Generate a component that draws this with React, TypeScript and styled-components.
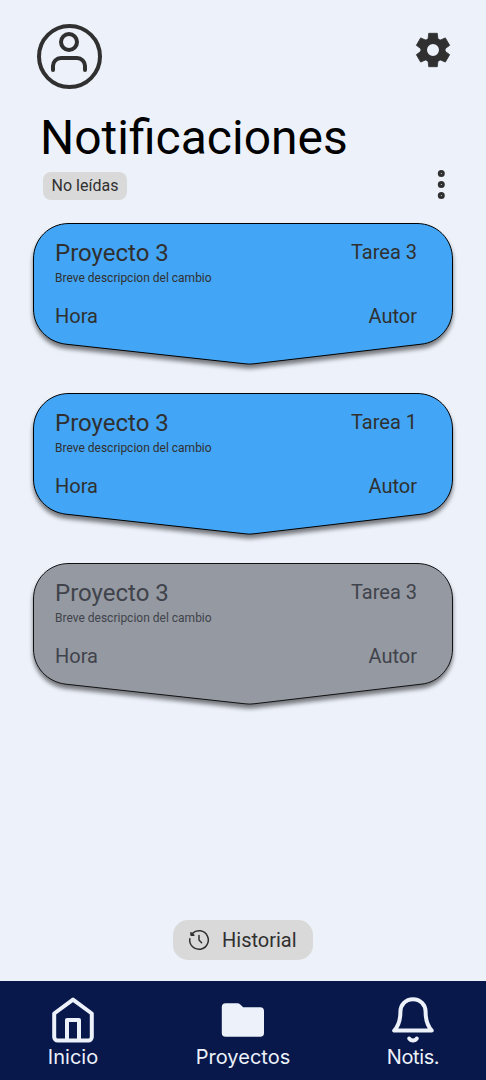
import React from "react";
import styled, { createGlobalStyle } from "styled-components";

const GlobalStyle = createGlobalStyle`
  * { box-sizing: border-box; }
  body { margin: 0; background: #ecf1fa; }
  h1, h2, p { margin: 0; font-weight: 400; }
  button {
    border: 0;
    padding: 0;
    background: none;
    color: inherit;
    font: inherit;
    cursor: pointer;
  }
  svg { display: block; }
`;

const Screen = styled.div`
  display: flex;
  flex-direction: column;
  width: 486px;
  height: 1080px;
  background: #ecf1fa;
  color: #303030;
  font-family: Roboto, "Liberation Sans", sans-serif;
`;

const Header = styled.header`
  display: flex;
  justify-content: space-between;
  align-items: flex-start;
  padding: 24px 33px 0 37px;
`;

const SettingsButton = styled.button`
  margin-top: 6px;
`;

const Title = styled.h1`
  margin: 21px 0 0 40px;
  font-size: 48px;
  line-height: 56px;
  color: #000;
`;

const FilterRow = styled.div`
  display: flex;
  justify-content: space-between;
  align-items: flex-start;
  padding: 6px 39px 0 43px;
`;

const FilterChip = styled.button`
  width: 84px;
  height: 28px;
  border-radius: 8px;
  background: #d9d9d9;
  font-size: 16px;
  line-height: 28px;
`;

const MoreButton = styled.button`
  margin-top: -2px;
`;

const CardList = styled.main`
  display: flex;
  flex-direction: column;
  gap: 28px;
  padding: 23px 33px 0;
`;

const Card = styled.article<{ $read?: boolean }>`
  position: relative;
  height: 142px;
  padding: 15px 36px 0 22px;
  color: ${(p) => (p.$read ? "#40434b" : "#303030")};
`;

const CardShape = styled.svg`
  position: absolute;
  inset: 0;
  overflow: visible;
  filter: drop-shadow(0 4px 2px rgba(0, 0, 0, 0.5));
`;

const CardRow = styled.div`
  position: relative;
  display: flex;
  justify-content: space-between;
  align-items: center;
  height: 30px;
  font-size: 20px;
`;

const Project = styled.h2`
  font-size: 24px;
  line-height: 30px;
`;

const Task = styled.span`
  padding-bottom: 2px;
`;

const Description = styled.p`
  position: relative;
  height: 33px;
  padding-top: 3px;
  font-size: 12px;
  line-height: 14px;
`;

const Footer = styled.div`
  display: flex;
  justify-content: center;
  margin-top: auto;
  padding-bottom: 21px;
`;

const HistoryButton = styled.button`
  display: flex;
  align-items: center;
  gap: 11px;
  width: 140px;
  height: 40px;
  padding-left: 14px;
  border-radius: 15px;
  background: #d9d9d9;
  font-size: 20px;
`;

const NavBar = styled.nav`
  display: flex;
  justify-content: space-between;
  height: 99px;
  padding: 14px 33px 0;
  background: #08184b;
  color: #ecf1fa;
  font-family: Inter, "Liberation Sans", sans-serif;
  text-rendering: geometricPrecision;
`;

const NavItem = styled.button<{ $width: number; $tracking?: number }>`
  display: flex;
  flex-direction: column;
  align-items: center;
  width: ${(p) => p.$width}px;
  height: 74px;
  font-size: 20px;
  line-height: 24px;
  letter-spacing: ${(p) => p.$tracking ?? 0}px;
  white-space: nowrap;
`;

const UserIcon = () => (
  <svg width="65" height="65" viewBox="0 0 65 65" fill="none" stroke="#303030" strokeWidth="4" strokeLinecap="round">
    <circle cx="32.5" cy="32.5" r="30.5" />
    <circle cx="32" cy="18" r="8" />
    <path d="M16 46v-4a8 8 0 0 1 8-8h16a8 8 0 0 1 8 8v4" />
  </svg>
);

const GearIcon = () => (
  <svg width="40" height="40" viewBox="-20 -20 40 40" fill="none" stroke="#303030">
    <circle r="9.300" strokeWidth="6.600" />
    {[0, 60, 120, 180, 240, 300].map((angle) => (
      <path
        key={angle}
        transform={`rotate(${angle})`}
        d="M-4.900-11-4.300-16.700H4.300L4.900-11z"
        fill="#303030"
        strokeWidth=".8"
        strokeLinejoin="round"
      />
    ))}
  </svg>
);

const MoreIcon = () => (
  <svg width="12" height="30" viewBox="0 0 12 30" fill="none" stroke="#303030" strokeWidth="3">
    <circle cx="6.3" cy="3.6" r="2" />
    <circle cx="6.3" cy="14.5" r="2" />
    <circle cx="6.3" cy="25.4" r="2" />
  </svg>
);

const HistoryIcon = () => (
  <svg width="24" height="24" viewBox="0 0 24 24" fill="none" stroke="#303030" strokeWidth="1.5" strokeLinecap="round" strokeLinejoin="round">
    <path d="M2.800 10.800a9.300 9.300 0 1 0 2.700-5.400" />
    <path d="M3.900 4.800 4.100 7.200 6.900 7.300z" fill="#303030" />
    <path d="M12 7.600V12l2.600 2.700" />
  </svg>
);

const HomeIcon = () => (
  <svg width="48" height="50" viewBox="0 0 48 50" fill="none" stroke="#ecf1fa" strokeWidth="4" strokeLinejoin="round">
    <path d="M5.200 18.500 24 4.600l18.800 13.900V42a3.600 3.600 0 0 1-3.600 3.600H8.800A3.600 3.600 0 0 1 5.200 42z" />
    <path d="M18 45V25h12v20" />
  </svg>
);

const FolderIcon = () => (
  <svg width="48" height="50" viewBox="0 0 48 50" fill="#ecf1fa">
    <path d="M6.600 8.200H18.500Q20 8.200 21 9.200L24.200 12.300H41.200a3.800 3.800 0 0 1 3.800 3.800v21.900a3.800 3.800 0 0 1-3.800 3.800H6.600a3.800 3.800 0 0 1-3.800-3.800V12a3.800 3.800 0 0 1 3.800-3.800z" />
  </svg>
);

const BellIcon = () => (
  <svg width="48" height="50" viewBox="0 0 48 50" fill="none" stroke="#ecf1fa" strokeWidth="4" strokeLinecap="round" strokeLinejoin="round">
    <path d="M24 4.200c-7.400 0-12.600 5.600-12.600 12.600C11.400 27 9 31.500 5.200 35.600h37.600C39 31.500 36.600 27 36.600 16.800 36.600 9.800 31.400 4.200 24 4.200z" />
    <path d="M20.200 43.500c1.700 2.700 5.900 2.700 7.600 0" />
  </svg>
);

const notifications = [
  { project: "Proyecto 3", task: "Tarea 3", read: false },
  { project: "Proyecto 3", task: "Tarea 1", read: false },
  { project: "Proyecto 3", task: "Tarea 3", read: true },
];

export default function App() {
  return (
    <>
      <GlobalStyle />
      <Screen>
        <Header>
          <button aria-label="Perfil"><UserIcon /></button>
          <SettingsButton aria-label="Ajustes"><GearIcon /></SettingsButton>
        </Header>
        <Title>Notificaciones</Title>
        <FilterRow>
          <FilterChip>No leídas</FilterChip>
          <MoreButton aria-label="Más opciones"><MoreIcon /></MoreButton>
        </FilterRow>
        <CardList>
          {notifications.map((n, i) => (
            <Card key={i} $read={n.read}>
              <CardShape width="420" height="142" viewBox="0 0 420 142">
                <path
                  d="M36 .5H384C404 .5 419.500 16 419.500 36V86C419.500 104 406 119.500 388 121.200L221 140.800Q216.500 141.400 212 140.800L33 121.200C14 119 .5 104 .5 86V36C.5 16 16 .5 36 .5z"
                  fill={n.read ? "#9599a1" : "#42a5f5"}
                  stroke={n.read ? "#101113" : "#000"}
                />
              </CardShape>
              <CardRow>
                <Project>{n.project}</Project>
                <Task>{n.task}</Task>
              </CardRow>
              <Description>Breve descripcion del cambio</Description>
              <CardRow>
                <span>Hora</span>
                <span>Autor</span>
              </CardRow>
            </Card>
          ))}
        </CardList>
        <Footer>
          <HistoryButton><HistoryIcon />Historial</HistoryButton>
        </Footer>
        <NavBar>
          <NavItem $width={80}><HomeIcon />Inicio</NavItem>
          <NavItem $width={100}><FolderIcon />Proyectos</NavItem>
          <NavItem $width={80} $tracking={-0.4}><BellIcon />Notis.</NavItem>
        </NavBar>
      </Screen>
    </>
  );
}
